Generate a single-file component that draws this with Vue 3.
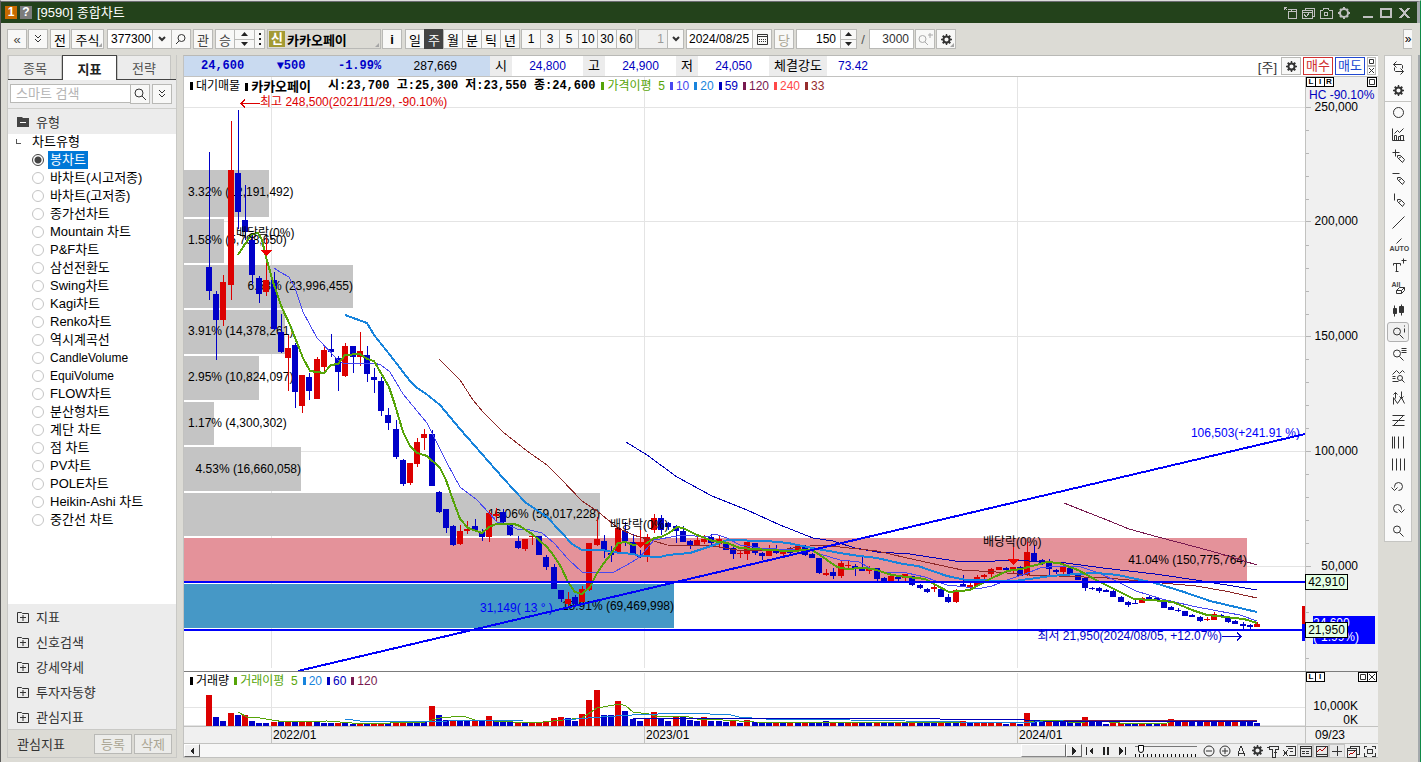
<script setup>
import { ref, computed } from 'vue'

const chartType = ref('봉차트')
const chartTypes = [
  '봉차트', '바차트(시고저종)', '바차트(고저종)', '종가선차트', 'Mountain 차트', 'P&F차트', '삼선전환도',
  'Swing차트', 'Kagi차트', 'Renko차트', '역시계곡선', 'CandleVolume', 'EquiVolume', 'FLOW차트', '분산형차트',
  '계단 차트', '점 차트', 'PV차트', 'POLE차트', 'Heikin-Ashi 차트', '중간선 차트',
]
const groups = ['지표', '신호검색', '강세약세', '투자자동향', '관심지표']
const periods = ['일', '주', '월', '분', '틱', '년']
const minutes = ['1', '3', '5', '10', '30', '60']

/* Chart space shared by both panes */
const X0 = 184
const W = 1121
const price = { y: 77, h: 594 }
const step = 1048 / 146
const cx = (i) => Math.round(209 + i * step)
const at = (x, y) => ({ left: ((x - X0) / W) * 100 + '%', top: ((y - price.y) / price.h) * 100 + '%' })
const atRight = (x, y) => ({ right: ((X0 + W - x) / W) * 100 + '%', top: ((y - price.y) / price.h) * 100 + '%' })
const axisY = (y) => ({ top: ((y - price.y) / price.h) * 100 + '%' })

/* colour, high, body top, body bottom, low */
const raw = `B152,267,291,300 B291,294,320,360 R275,282,320,326 R121,170,285,300 B110,173,212,229 B185,220,232,240
B235,240,275,284 B276,278,294,303 R260,280,292,296 B272,280,329,330 B314,332,352,353 R335,348,358,391 B343,345,392,408
R375,375,406,413 B373,377,391,400 R357,359,399,399 R345,350,367,374 B334,349,352,357 B356,358,372,391 R343,346,376,377
B346,346,357,373 R332,351,357,366 B346,355,374,382 B368,377,380,393 B377,381,411,416 B408,415,423,430 B420,429,457,459
B459,460,484,486 R463,463,483,485 R438,442,464,467 R429,434,438,450 B430,434,486,486 B491,492,512,513 B509,509,528,533
B525,526,545,546 R525,531,544,545 R521,529,531,534 B519,526,530,531 B529,532,537,541 R510,513,537,542 R508,514,516,521
B509,512,522,525 B524,525,535,536 B536,541,548,549 R539,539,549,551 R535,536,537,545 B536,536,555,555 B555,557,567,570
B564,567,589,589 B590,590,599,602 R592,599,604,607 B595,597,604,605 R586,589,602,602 R543,543,590,591 R517,539,545,546
B535,541,550,558 B546,553,555,562 R527,528,553,553 B522,531,541,546 B534,542,554,554 B550,555,557,558 R534,537,556,562
R514,518,530,533 B515,518,530,535 B522,523,527,530 B525,526,531,543 B526,531,542,542 B540,541,545,549 R537,540,545,546
R535,539,542,544 B534,537,543,547 R535,539,544,547 B543,544,550,550 B547,548,554,559 R550,553,554,558 R541,542,554,560
B543,543,553,555 B552,553,556,560 R545,550,556,556 B545,550,553,554 R551,552,554,556 B547,550,553,554 R545,546,550,551
B545,547,555,556 B553,554,558,558 B558,558,573,574 R569,573,575,576 B568,572,576,579 R561,563,576,578 R561,565,566,568
B564,566,568,576 B555,567,571,571 R566,569,571,574 B568,568,579,581 B577,578,581,583 R576,576,581,582 B577,577,579,581
R574,574,578,581 B576,576,585,586 B584,585,588,589 B588,589,592,593 R584,587,589,592 B588,589,597,597 B594,597,602,603
R589,590,602,603 B575,584,587,587 R580,585,587,589 R575,577,586,586 R574,575,577,579 R568,569,574,579 R567,567,570,570
B567,568,570,572 R567,567,571,574 B566,567,576,576 R542,552,575,576 B545,553,562,562 B559,560,564,565 B559,561,569,575
B569,570,572,574 R563,567,572,574 B567,568,574,575 B573,574,580,580 B577,578,588,591 B587,588,589,590 B587,588,591,593
B589,590,592,592 B590,591,597,597 B596,597,602,602 B601,602,605,607 B600,603,604,604 R597,598,603,603 B596,597,599,600
B597,598,601,601 B600,601,608,608 B606,607,610,610 B608,610,611,612 B611,611,616,616 B614,615,617,617 B616,617,621,622
R617,619,620,621 R612,614,620,620 B614,615,617,618 B617,617,622,623 B620,621,624,624 B622,624,626,629 B624,625,627,629
R622,624,627,627`
const candles = raw.split(/\s+/).map((s, i) => {
  const [high, top, bottom, low] = s.slice(1).split(',').map(Number)
  return { x: cx(i), up: s[0] === 'R', high, top, bottom, low }
})

const volRaw = `R31 B9 B5 R13 B11 R11 B5 B3 B3 R4 B4 R5 B5 R5 R5 B4 B3 B3 R3 B3 B2 R2 B2 R2 R3 B3 R5 R5 B4 B4 B4 R20 B11 B6 R6
B5 B5 R5 B5 R10 B6 B5 B4 R4 B3 R3 R4 R5 R8 R9 B8 B5 R12 R26 R36 B11 B11 R25 B15 B7 B5 R8 R14 B8 B5 R10 B9 B6 B5 R9 B5 B5
B4 R6 B3 R6 B4 B4 B3 R3 B3 R3 B3 R4 B3 B3 B5 R3 B4 R4 R3 B3 B3 R3 B3 B3 R3 B4 R3 B3 B3 B3 R3 B3 B3 R5 B4 R4 R3 R4 R3
B2 R3 B2 R13 B5 B5 R4 B4 B5 B4 B3 R9 B4 B5 B2 R5 R3 B2 B2 R3 B2 B2 R3 R7 B5 R5 B4 B4 R5 B4 R5 B4 R5 B4 B4 B3`
const volumes = volRaw.split(/\s+/).slice(0, 147).map((s, i) => ({ x: cx(i), up: s[0] === 'R', h: Number(s.slice(1)) }))

const averages = [
  { k: 'm59', p: '626,442 647,455 677,477 712,496 747,510 780,525 813,538 833,541 855,548 877,552 910,554 955,561 988,562 1003,560 1029,561 1066,563 1103,568 1155,574 1196,580 1257,590' },
  { k: 'm120', p: '1064,503 1084,511 1107,520 1129,529 1158,537 1196,547 1218,553 1244,561 1257,565' },
  { k: 'm33', p: '439,359 460,380 473,400 483,412 503,432 527,451 547,465 560,478 582,501 597,511 618,528 633,535 654,541 667,545 713,546 737,550 762,551 780,550 800,547 820,545 840,547 877,551 907,558 962,570 996,572 1029,575 1059,576 1084,577 1107,578 1129,580 1162,583 1196,586 1225,591 1257,598' },
  { k: 'm10', p: '274,268 280,272 289,277 295,288 303,312 310,325 317,338 338,360 343,363 360,364 374,363 381,365 390,372 403,394 427,423 432,433 447,463 460,487 477,500 489,513 497,522 503,523 517,529 530,530 542,533 554,543 568,559 582,572 612,573 627,565 640,557 654,540 683,535 707,537 715,534 727,538 740,545 760,548 812,551 820,554 840,560 859,562 870,568 884,572 907,573 925,577 947,585 966,587 977,589 992,586 1010,579 1025,574 1040,568 1059,566 1081,567 1099,573 1118,582 1136,591 1162,599 1192,606 1218,611 1240,615 1257,621' },
  { k: 'm20', p: '345,315 367,323 374,335 390,355 410,381 417,388 425,393 440,405 460,429 503,478 525,502 547,517 561,532 572,544 582,550 603,550 612,552 633,554 640,556 660,557 668,555 690,553 720,543 727,540 767,541 788,543 812,548 840,553 859,556 877,558 903,564 918,566 947,576 966,580 1014,581 1029,579 1051,576 1077,574 1096,573 1118,575 1136,579 1155,583 1184,592 1210,601 1257,612' },
  { k: 'm5', p: '238,255 245,244 252,234 258,233 262,240 266,257 273,282 282,308 290,325 303,358 310,371 324,373 331,365 338,364 345,355 360,354 367,359 374,361 389,387 395,405 403,432 410,446 417,453 427,456 440,468 446,480 453,500 460,519 468,528 482,533 489,527 496,524 513,524 518,525 532,534 547,547 554,556 561,567 568,582 575,592 582,594 590,587 597,573 604,563 611,554 618,543 626,542 633,545 647,543 654,538 661,537 669,533 677,527 683,528 697,535 713,541 727,543 740,548 753,549 787,551 812,550 820,555 827,560 837,567 847,569 862,568 873,569 892,575 907,577 925,579 934,584 949,592 970,590 977,586 992,578 1007,571 1021,569 1036,565 1047,562 1059,563 1078,570 1096,580 1114,589 1134,599 1151,600 1173,602 1192,610 1207,615 1225,617 1244,619 1257,623' },
]
const volAverages = [
  { k: 'm5', p: '238,711 247,716 260,717 272,719 285,721 327,720 352,722 390,722 425,721 440,717 463,715 475,719 513,721 544,721 563,719 582,717 597,707 620,703 626,705 633,711 649,713 658,716 685,715 697,718 723,719 754,721 1023,722 1040,719 1059,719 1073,722 1097,720 1120,722 1167,722 1173,720 1207,720 1257,721' },
  { k: 'm20', p: '345,718 360,720 390,721 448,720 524,719 563,719 601,716 632,714 658,713 689,712 731,714 739,716 765,718 850,719 960,721 1010,722 1060,720 1257,721' },
  { k: 'm59', p: '633,717 780,717 940,718 1010,718 1040,720 1257,721' },
  { k: 'm120', p: '1064,719 1257,719' },
]
const zones = [
  { y: 170, h: 47, to: 269, k: 'gray', t: '3.32% (12,191,492)', ty: 192 },
  { y: 219, h: 44, to: 224, k: 'gray', t: '1.58% (5,798,650)', ty: 240 },
  { y: 265, h: 43, to: 353, k: 'gray', t: '6.53% (23,996,455)', ty: 286, end: true },
  { y: 310, h: 44, to: 285, k: 'gray', t: '3.91% (14,378,261)', ty: 331 },
  { y: 356, h: 44, to: 259, k: 'gray', t: '2.95% (10,824,097)', ty: 377 },
  { y: 402, h: 43, to: 214, k: 'gray', t: '1.17% (4,300,302)', ty: 423 },
  { y: 447, h: 44, to: 301, k: 'gray', t: '4.53% (16,660,058)', ty: 469, end: true },
  { y: 493, h: 43, to: 600, k: 'gray', t: '16.06% (59,017,228)', ty: 514, end: true },
  { y: 538, h: 43, to: 1247, k: 'rose', t: '41.04% (150,775,764)', ty: 560, end: true },
  { y: 584, h: 44, to: 674, k: 'sky', t: '18.91% (69,469,998)', ty: 606, end: true },
]
const zoneLabel = (z) => (z.end ? atRight(z.to, z.ty) : at(188, z.ty))
const notes = [
  { x: 260, y: 102, t: '최고 248,500(2021/11/29, -90.10%)', k: 'red' },
  { x: 236, y: 233, t: '배당락(0%)', k: 'ink' },
  { x: 610, y: 525, t: '배당락(0%)', k: 'ink' },
  { x: 983, y: 542, t: '배당락(0%)', k: 'ink' },
  { x: 480, y: 608, t: '31,149( 13 ° )', k: 'blue' },
]
const arrows = [[266, 238, 250], [640, 530, 542], [1013, 547, 559]]
const gridX = [271, 644, 1017]
const gridY = [107, 221, 336, 451, 566]
const axisLabels = gridY.map((y, i) => ({ y, t: ['250,000', '200,000', '150,000', '100,000', '50,000'][i] }))
const minor = computed(() => {
  const out = []
  for (let n = 1; n < 25; n++) if (n % 5) out.push(Math.round(107 + n * 22.95))
  return out
})

const gear = 'M7 0h2v2l2 1 1.500-1.500 2 2L13 5l1 2h2v2h-2l-1 2 1.500 1.500-2 2L11 13l-2 1v2H7v-2l-2-1-1.500 1.500-2-2L3 11 2 9H0V7h2l1-2-1.500-1.500 2-2L5 3l2-1zM8 5a3 3 0 1 0 0 6 3 3 0 0 0 0-6z'
const lens = 'M10 7a3.500 3.500 0 1 1-7 0 3.500 3.500 0 0 1 7 0zM9 10l4 4'
const tools = [
  { n: '새로고침', d: 'M6 1L3 4l3 3M3 4h8l1 1v3M10 8l3 3-3 3M13 11H5l-1-1V7' },
  { n: '설정', d: gear, gear: true },
  { n: '원', d: 'M13 8A5 5 0 1 1 3 8a5 5 0 0 1 10 0z', rule: true },
  { n: '차트', d: 'M2 2v12h12M4 14V9h2v5M8 14V10h2v4M10 14V9h3v5M4 7l3-3 2 2 4-4' },
  { n: '십자선 그리기', d: 'M2 4h7M5 1v7M7 7h3l4 4-2 3-5-5zM8 10l3-2' },
  { n: '수평선 그리기', d: 'M2 3h7M7 7h3l4 4-2 3-5-5zM8 10l3-2' },
  { n: '수직선 그리기', d: 'M4 1v7M7 7h3l4 4-2 3-5-5zM8 10l3-2' },
  { n: '추세선', d: 'M2 14L14 2' },
  { n: '자동 추세선', d: 'M6 7l5-5', t: 'AUTO', ty: 14 },
  { n: '텍스트', d: 'M3 7V5h7v2M6 5v8M5 13h3M11 2h5M13 0v5' },
  { n: '전체 지우기', d: 'M6 10l3-3h5l-3 3zM6 10v3h5v-3M11 13l3-3V7', t: 'All', ty: 6 },
  { n: '캔들', d: 'M3 6h3v5H3zM9 4h4v6H9zM4 3v11M11 2v11', solid: true },
  { n: '돋보기 정보', d: lens + 'M14 4v4M14 1v1', on: true },
  { n: '돋보기 목록', d: lens + 'M11 2h5M11 4h5M11 6h5' },
  { n: '구간 분석', d: 'M2 6l4-4 3 3 3-3 2 2M2 8h3M2 10h3M2 13h6M12 9.500a2.500 2.500 0 1 1-5 0 2.500 2.500 0 0 1 5 0zM11 11l3 3' },
  { n: '파동', d: 'M3 14V7l4 6 4-6 3 6M5 2v6M3 4l2-2 2 2M11 1v7M9 6l2 2 2-2' },
  { n: '지그재그', d: 'M2 3h12M2 8h12M2 13h12M13 3L3 13' },
  { n: '시간대', d: 'M2 2v12M4 2v12M8 2v12M13 2v12' },
  { n: '등간격', d: 'M2 2v12M6 2v12M10 2v12M14 2v12' },
  { n: '되돌리기', d: 'M4 9V8a4 4 0 1 1 4 4M1 9l3 3 3-3' },
  { n: '다시하기', d: 'M11 9V8a4 4 0 1 0-4 4M8 9l3 3 3-3' },
  { n: '확대', d: lens },
]
const bottomTools = [
  { n: '축소', d: 'M13 8A5 5 0 1 1 3 8a5 5 0 0 1 10 0zM5 8h6', round: true },
  { n: '확대', d: 'M13 8A5 5 0 1 1 3 8a5 5 0 0 1 10 0zM5 8h6M8 5v6', round: true },
  { n: '글자', d: 'M5 13V10l3-7 3 7v3M5 10h6' },
  { n: '설정', d: gear, gear: true },
  { n: '공구', d: 'M4 3h9v3h-3v8H7V6H4zM2 4h2M9 9h3' },
  { n: '내보내기', d: 'M5 3h9v9H8M7 5h5M9 8h3M2 7l5 6M7 7l-5 6' },
  { n: '표', d: 'M3 3h11v10H3zM3 5h11M5 8h3M5 10h3M9 8h3M9 10h3', on: true },
  { n: '차트창', d: 'M3 3h11v10H3zM3 11h11', r: 'M4 9l3-3 2 2 4-4', on: true },
  { n: '십자선', d: 'M8 3v10M3 8h10', on: true },
  { n: '창 복사', d: 'M5 5V3h9v8h-3M2 5h9v9H2zM2 7h9', r: 'M4 12l2-2 1 1 3-3' },
  { n: '전체화면', d: 'M3 6V3h3M11 3h3v3M14 10v3h-3M6 13H3v-3M6 6h5v4H6z' },
]
</script>

<template>
  <div class="window">
    <header class="title">
      <span class="badge orange">1</span><span class="badge">?</span>
      <h1>[9590] 종합차트</h1>
      <div class="sys">
        <button aria-label="분리"><svg width="16" height="16" viewBox="0 0 16 16"><path d="M2 5V2h3M2 2l3 3M6 4h8v9H6V6M6 6h8M9 4v2" /></svg></button>
        <button aria-label="복사"><svg width="16" height="16" viewBox="0 0 16 16"><path d="M5 5V3h9v8h-2M2 5h10v8H2zM2 7h10M4 9l2 3 4-5" /></svg></button>
        <button aria-label="캡처"><svg width="16" height="16" viewBox="0 0 16 16"><path d="M2 5h3l1-2h4l1 2h3v8H2zM10 9a2 2 0 1 1-4 0 2 2 0 0 1 4 0z" /></svg></button>
        <button aria-label="설정"><svg width="16" height="16" viewBox="0 0 16 16"><path class="medium" d="M12 8a4 4 0 1 1-8 0 4 4 0 0 1 8 0zM8 2v2M8 12v2M2 8h2M12 8h2M4 4l1 1M11 11l1 1M4 12l1-1M11 5l1-1" /></svg></button>
        <button class="gap" aria-label="최소화"><svg width="16" height="16" viewBox="0 0 16 16"><path class="thick" d="M3 12h10" /></svg></button>
        <button aria-label="최대화"><svg width="16" height="16" viewBox="0 0 16 16"><path class="thick" d="M3 4h10v8H3z" /></svg></button>
        <button aria-label="닫기"><svg width="16" height="16" viewBox="0 0 16 16"><path class="thick" d="M4 3l9 10M13 3L4 13" /></svg></button>
      </div>
    </header>

    <div class="toolbar">
      <button class="tb soft">«</button>
      <button class="tb"><svg width="8" height="10" viewBox="0 0 8 10"><path d="M1 1l3 3 3-3M1 5l3 3 3-3" /></svg></button>
      <button class="tb g1">전</button>
      <button class="tb stock corner">주식</button>
      <div class="joined g2">
        <input class="code" aria-label="종목코드" value="377300">
        <button class="tb" aria-label="목록"><svg width="10" height="10" viewBox="0 0 10 10"><path class="thick" d="M2 3l3 3 3-3" /></svg></button>
        <button class="tb" aria-label="검색"><svg width="14" height="14" viewBox="0 0 14 14"><path d="M11 6a3.500 3.500 0 1 1-7 0 3.500 3.500 0 0 1 7 0zM5 9l-3 3" /></svg></button>
      </div>
      <button class="tb g1 dim">관</button>
      <div class="joined g1">
        <button class="tb dim">승</button>
        <div class="spin tallspin"><button aria-label="이전"><svg width="7" height="4" viewBox="0 0 7 4"><path class="fill" d="M0 4h7L3.500 0z" /></svg></button><button aria-label="다음"><svg width="7" height="4" viewBox="0 0 7 4"><path class="fill" d="M0 0h7L3.500 4z" /></svg></button></div>
        <button class="tb dots" aria-label="더보기"><svg width="2" height="12" viewBox="0 0 2 12"><path class="fill" d="M0 0h2v2H0zM0 5h2v2H0zM0 10h2v2H0z" /></svg></button>
      </div>
      <button class="tb name corner g1"><b class="sin">신</b><b>카카오페이</b></button>
      <button class="tb"><b>i</b></button>
      <div class="joined g2">
        <button v-for="p in periods" :key="p" class="tb" :class="{ dark: p === '주' }">{{ p }}</button>
      </div>
      <div class="joined mins">
        <button v-for="m in minutes" :key="m" class="tb">{{ m }}</button>
      </div>
      <div class="joined g1">
        <input class="cycle" aria-label="주기" value="1" disabled>
        <button class="tb slim" aria-label="주기 목록"><svg width="10" height="10" viewBox="0 0 10 10"><path class="thick" d="M2 3l3 3 3-3" /></svg></button>
      </div>
      <div class="joined g1">
        <input class="date" aria-label="날짜" value="2024/08/25">
        <button class="tb" aria-label="달력"><svg width="13" height="13" viewBox="0 0 13 13"><path d="M1.500 1.500h10v10h-10zM1 3.500h11" /><path class="dash" d="M3 6.500h7M3 8.500h7" /></svg></button>
      </div>
      <button class="tb faint g1" disabled>당</button>
      <div class="joined g1">
        <input class="count" aria-label="봉 개수" value="150">
        <div class="spin"><button aria-label="증가"><svg width="7" height="4" viewBox="0 0 7 4"><path class="fill" d="M0 4h7L3.500 0z" /></svg></button><button aria-label="감소"><svg width="7" height="4" viewBox="0 0 7 4"><path class="fill" d="M0 0h7L3.500 4z" /></svg></button></div>
      </div>
      <span class="slash">/</span>
      <input class="total" aria-label="전체 개수" value="3000">
      <button class="tb faint" aria-label="추가 조회"><svg width="16" height="16" viewBox="0 0 16 16"><path d="M9 8a3.500 3.500 0 1 1-7 0 3.500 3.500 0 0 1 7 0zM8 11l3 3M11 4h5M13 2v5" /></svg></button>
      <button class="tb corner" aria-label="환경설정"><svg width="11" height="11" viewBox="0 0 16 16"><path class="gear" :d="gear" /></svg></button>
      <button class="tb more">»</button>
    </div>

    <div class="work">
      <aside class="side">
        <nav class="tabs">
          <button>종목</button><button class="on">지표</button><button>전략</button>
        </nav>
        <div class="search">
          <input aria-label="스마트 검색" placeholder="스마트 검색">
          <button class="tb" aria-label="찾기"><svg width="14" height="14" viewBox="0 0 14 14"><path d="M10 6a4 4 0 1 1-8 0 4 4 0 0 1 8 0zM9 9l4 4" /></svg></button>
          <button class="tb gapped" aria-label="펼치기"><svg width="8" height="10" viewBox="0 0 8 10"><path d="M1 1l3 3 3-3M1 5l3 3 3-3" /></svg></button>
        </div>
        <button class="sec"><svg width="12" height="10" viewBox="0 0 12 10"><path class="folder" d="M0 0h5l1 1h6v9H0z" /><path class="white" d="M3 5.500h6" /></svg>유형</button>
        <div class="tree">
          <div class="root"><span class="elbow"></span>차트유형</div>
          <label v-for="c in chartTypes" :key="c" :class="{ small: c.endsWith('Volume') }">
            <input v-model="chartType" type="radio" name="type" :value="c"><span>{{ c }}</span>
          </label>
        </div>
        <button v-for="g in groups" :key="g" class="group"><svg width="12" height="12" viewBox="0 0 12 12"><path d="M.5 1.500h4l1 1h6v9H.5zM3 6.500h6M6 4v6" /></svg>{{ g }}</button>
        <div class="fav"><span>관심지표</span><button disabled>등록</button><button disabled>삭제</button></div>
      </aside>

      <main class="main">
        <div class="info">
          <div class="now"><b>24,600</b><b>▼500</b><b>-1.99%</b><span>287,669</span></div>
          <i>시</i><em>24,800</em><i>고</i><em>24,900</em><i>저</i><em>24,050</em><i class="power">체결강도</i><em>73.42</em>
          <div class="right">
            <span>[주]</span>
            <button class="tb" aria-label="설정"><svg width="11" height="11" viewBox="0 0 16 16"><path class="gear" :d="gear" /></svg></button>
            <button class="buy">매수</button><button class="sell">매도</button>
            <div class="mini"><button aria-label="최대"><svg width="9" height="9" viewBox="0 0 9 9"><path d="M2.500 2.500h4v4h-4z" /></svg></button><button aria-label="닫기"><svg width="9" height="9" viewBox="0 0 9 9"><path d="M2 2l5 5M7 2L2 7" /></svg></button></div>
          </div>
        </div>

        <div class="row grow">
          <div class="plot">
            <svg class="layer" viewBox="184 77 1121 594" preserveAspectRatio="none">
              <path class="grid" :d="gridY.map(y => `M184 ${y}.5H1305`).join('') + gridX.map(x => `M${x}.5 77V668`).join('')" />
              <rect v-for="z in zones" :key="z.y" :class="z.k" x="184" :y="z.y" :width="z.to - 184" :height="z.h" />
            </svg>
            <span v-for="z in zones" :key="z.t" class="lab ink" :style="zoneLabel(z)">{{ z.t }}</span>
            <svg class="layer" viewBox="184 77 1121 594" preserveAspectRatio="none">
              <g v-for="c in candles" :key="c.x" :class="c.up ? 'up' : 'down'">
                <rect :x="c.x" :y="c.high" width="1" :height="Math.max(1, c.low - c.high)" />
                <rect :x="c.x - 3" :y="c.top" width="6" :height="Math.max(1, c.bottom - c.top)" />
              </g>
              <polyline v-for="a in averages" :key="a.k" class="ma" :class="a.k" :points="a.p" />
              <path class="trend" d="M184 582H1305M184 630H1305M298 671L1305 434" />
              <path v-for="a in arrows" :key="a[0]" class="event" :d="`M${a[0]} ${a[1]}h1v${a[2] - a[1]}h5l-5.500 6-5.500-6h5z`" />
              <path class="redline" d="M260 103.500H241M245 99.500l-4 4 4 4" />
              <path class="blueline" d="M1222 636.500h19M1237 632.500l4 4-4 4" />
              <rect class="up" x="1302" y="606" width="3" height="18" />
              <rect class="blk" x="1302" y="624" width="3" height="17" />
            </svg>
            <span v-for="n in notes" :key="n.x" class="lab" :class="n.k" :style="at(n.x, n.y)">{{ n.t }}</span>
            <span class="lab blue" :style="atRight(1300, 433)">106,503(+241.91 %)</span>
            <span class="lab navy" :style="atRight(1222, 636)">최저 21,950(2024/08/05, +12.07%)</span>
            <div class="legend">
              <span>대기매물</span><b>카카오페이</b><b class="ohlc">시:23,700 고:25,300 저:23,550 종:24,600</b>
              <span class="c5">가격이평&nbsp; 5</span><span class="c10">10</span><span class="c20">20</span><span class="c59">59</span><span class="c120">120</span><span class="c240">240</span><span class="c33">33</span>
            </div>
          </div>
          <div class="axis">
            <svg class="layer" viewBox="0 77 73 594" preserveAspectRatio="none">
              <path class="tick" :d="gridY.map(y => `M0 ${y}.5h5`).join('') + minor.map(y => `M0 ${y}.5h3`).join('')" />
            </svg>
            <div class="boxes"><button>L</button><button>I</button><button>R</button><button class="last" aria-label="확대"><svg width="8" height="8" viewBox="0 0 8 8"><path d="M1.500 1.500h5v5h-5z" /></svg></button></div>
            <span class="hc" :style="axisY(95)">HC -90.10%</span>
            <span v-for="l in axisLabels" :key="l.y" class="num" :style="axisY(l.y)">{{ l.t }}</span>
            <div class="last-price" :style="axisY(630)"><span>24,600</span><span>(-1.99%)</span></div>
            <span class="tag" :style="axisY(582)">42,910</span>
            <span class="tag" :style="axisY(630)">21,950</span>
          </div>
        </div>

        <div class="row vol">
          <div class="plot">
            <svg class="layer" viewBox="184 671 1121 54" preserveAspectRatio="none">
              <path class="grid" :d="'M184 706.500H1305M184 724.500H1305' + gridX.map(x => `M${x}.5 672V725`).join('')" />
              <rect v-for="v in volumes" :key="v.x" :class="v.up ? 'up' : 'down'" :x="v.x - 3" :y="725 - v.h" width="6" :height="v.h" />
              <polyline v-for="a in volAverages" :key="a.k" class="ma thin" :class="a.k" :points="a.p" />
            </svg>
            <div class="legend"><span>거래량</span><span class="c5">거래이평&nbsp; 5</span><span class="c20">20</span><span class="c59">60</span><span class="c120">120</span></div>
          </div>
          <div class="axis">
            <div class="boxes"><button>L</button><button>I</button><button class="last" aria-label="확대"><svg width="8" height="8" viewBox="0 0 8 8"><path d="M1.500 1.500h5v5h-5z" /></svg></button><button aria-label="닫기"><svg width="8" height="8" viewBox="0 0 8 8"><path d="M1 1l6 6M7 1L1 7" /></svg></button></div>
            <div class="volnums"><span>10,000K</span><span>0K</span></div>
          </div>
        </div>

        <div class="row dates">
          <div class="plot">
            <span :style="{ left: (87 / W) * 100 + '%' }">2022/01</span>
            <span :style="{ left: (460 / W) * 100 + '%' }">2023/01</span>
            <span :style="{ left: (833 / W) * 100 + '%' }">2024/01</span>
          </div>
          <div class="axis">09/23</div>
        </div>

        <div class="bottom">
          <button class="sb" aria-label="왼쪽"><svg width="8" height="8" viewBox="0 0 8 8"><path class="fill" d="M6 0v8L2 4z" /></svg></button>
          <div class="track"><div class="thumb"></div></div>
          <button class="sb" aria-label="오른쪽"><svg width="8" height="8" viewBox="0 0 8 8"><path class="fill" d="M2 0v8l4-4z" /></svg></button>
          <button class="play" aria-label="처음"><svg width="10" height="8" viewBox="0 0 10 8"><path class="fill" d="M1 0h1v8H1zM8 0v8L4 4z" /></svg></button>
          <button class="play" aria-label="일시정지"><svg width="10" height="8" viewBox="0 0 10 8"><path class="fill" d="M2 0h2v8H2zM6 0h2v8H6z" /></svg></button>
          <button class="play" aria-label="끝"><svg width="10" height="8" viewBox="0 0 10 8"><path class="fill" d="M8 0h1v8H8zM2 0v8l4-4z" /></svg></button>
          <input class="range" type="range" aria-label="재생 속도" min="0" max="20" value="1">
          <button v-for="b in bottomTools" :key="b.n" class="bt" :class="{ on: b.on }" :aria-label="b.n">
            <svg :width="b.gear ? 11 : 16" :height="b.gear ? 11 : 16" viewBox="0 0 16 16"><path :class="{ gear: b.gear, round: b.round }" :d="b.d" /><path v-if="b.r" class="crim" :d="b.r" /></svg>
          </button>
        </div>
      </main>

      <aside class="tools">
        <button v-for="t in tools" :key="t.n" :class="{ on: t.on, rule: t.rule }" :aria-label="t.n">
          <svg v-if="t.gear" width="11" height="11" viewBox="0 0 16 16"><path class="gear" :d="t.d" /></svg>
          <svg v-else width="16" height="16" viewBox="-0.5 -0.5 16 16">
            <path :class="{ solid: t.solid }" :d="t.d" />
            <text v-if="t.t" :x="t.t === 'All' ? 1 : -1" :y="t.ty">{{ t.t }}</text>
          </svg>
        </button>
      </aside>
    </div>
  </div>
</template>

<style>
html, body { height: 100%; }
body { margin: 0; background: #dcdbd5; }
</style>

<style scoped>
* { box-sizing: border-box; }
.window {
  display: flex; flex-direction: column; min-height: 100vh;
  border-top: 1px solid #dcdcdc; border-left: 1px solid #5a5a5a; border-right: 1px solid #0f8a47;
  background: #dcdbd5; color: #000;
  font-family: "Liberation Sans", "Noto Sans CJK KR", sans-serif; font-size: 12px;
}
button, input { font: inherit; color: inherit; margin: 0; padding: 0; border-radius: 0; }
button { border: 0; background: none; display: flex; align-items: center; justify-content: center; flex: none; white-space: nowrap; }
svg { display: block; flex: none; }
svg path { fill: none; stroke: #333; stroke-width: 1; }
svg path.thick { stroke-width: 2; }
svg path.gear { fill: #333; stroke: none; fill-rule: evenodd; }
svg path.fill { fill: #222; stroke: none; }
svg path.dash { stroke-dasharray: 1 1; }

.title { height: 22px; display: flex; align-items: center; background: #23421b; border-top: 1px solid #6c6c72; border-right: 3px solid #a4a8ac; padding: 0 5px 0 4px; color: #fff; }
.title h1 { font-size: 13px; font-weight: 400; margin: 0 0 0 2px; line-height: 18px; }
.badge { width: 12px; height: 13px; line-height: 13px; background: #7c7c7c; font-weight: 700; font-size: 12px; text-align: center; margin-right: 3px; }
.badge.orange { background: #c86a00; }
.sys { margin-left: auto; display: flex; align-items: center; gap: 2px; }
.sys .gap { margin-left: 6px; }
.sys svg path { stroke: #c0c0c0; shape-rendering: crispEdges; }
.sys svg path.medium { stroke-width: 2; shape-rendering: auto; }

.toolbar { height: 32px; display: flex; align-items: center; gap: 1px; padding: 0 8px 0 6px; font-size: 13px; }
.g1 { margin-left: 1px; }
.g2 { margin-left: 2px; }
.tb { height: 20px; width: 20px; background: #f8f8f7; border: 1px solid #b9b9b6; position: relative; }
.soft { color: #444; }
.stock { width: 33px; }
.joined { display: flex; }
.joined > * + * { margin-left: -1px; }
.mins { font-size: 12px; }
.toolbar input { height: 20px; border: 1px solid #b9b9b6; background: #fff; font-size: 12px; min-width: 0; }
.code { width: 46px; padding-left: 3px; }
.dim { color: #444; }
.corner::after { content: ""; position: absolute; right: 1px; bottom: 1px; border: 2px solid transparent; border-right-color: #a5a5a5; border-bottom-color: #a5a5a5; }
.spin { width: 17px; height: 20px; display: flex; flex-direction: column; border: 1px solid #b9b9b6; background: #f8f8f7; }
.tallspin { width: 21px; }
.spin button { flex: 1; }
.spin button + button { border-top: 1px solid #b9b9b6; }
.dots { width: 11px; }
.name { width: 114px; background: #dcdbd5; justify-content: flex-start; font-size: 13px; }
.sin { background: #a39a34; color: #fff; width: 16px; height: 16px; line-height: 15px; margin: 0 2px 0 1px; font-weight: 700; }
.dark { background: #444; color: #fff; border-color: #444; }
.cycle { width: 30px; text-align: right; padding-right: 3px; background: #f0f0ef !important; color: #999; }
.slim { width: 17px; }
.date { width: 67px; padding-left: 2px; }
.faint { color: #aaa593; }
.faint svg path { stroke: #aaa; }
.count { width: 45px; text-align: right; padding-right: 4px; }
.total { width: 45px; text-align: right; padding-right: 4px; color: #333; }
.slash { width: 10px; text-align: center; color: #555; }
.more { margin-left: auto; width: 9px; font-size: 12px; border-right: 0; }

.work { flex: 1; display: flex; gap: 6px; padding: 0 6px 4px; border-right: 2px solid #a4a8ac; min-height: 0; }

.side { width: 170px; flex: none; display: flex; flex-direction: column; background: #ececec; border-left: 1px solid #c9c9c6; border-right: 1px solid #c9c9c6; font-size: 13px; color: #333; }
.tabs { display: flex; height: 25px; background: #dcdbd5; border-bottom: 1px solid #444; }
.tabs button { width: 54px; height: 24px; background: #ececec; border: 1px solid #c5c5c2; border-bottom: 0; color: #555; }
.tabs .on { background: #fff; border-color: #444; color: #222; font-weight: 700; width: 55px; height: 25px; }
.search { height: 29px; display: flex; padding: 4px 4px 5px 2px; border-bottom: 1px solid #cfcfcc; background: #ececec; }
.search input { flex: 1; min-width: 0; border: 1px solid #b9b9b6; border-right: 0; padding-left: 5px; font-size: 13px; background: #fff; }
.search input::placeholder { color: #b4b4b4; }
.gapped { margin-left: 2px; }
.sec, .group { height: 25px; width: 100%; justify-content: flex-start; padding-left: 9px; gap: 7px; }
.sec svg path.folder { fill: #444; stroke: none; }
.sec svg path.white { stroke: #fff; }
.tree { flex: 1; background: #fff; color: #000; padding-bottom: 4px; }
.root { height: 17px; line-height: 16px; display: flex; gap: 11px; padding-left: 8px; }
.elbow { width: 5px; height: 5px; border: solid #555; border-width: 0 0 1px 1px; margin-top: 5px; }
.tree label { height: 18px; display: flex; align-items: center; gap: 4px; padding-left: 24px; }
.tree label.small { font-size: 12px; }
.tree label.small span { line-height: 19px; }
.tree label span { padding: 0 2px; height: 18px; line-height: 17px; }
.tree input { appearance: none; width: 12px; height: 12px; border: 1px solid #c4c4c4; border-radius: 50%; background: #fff; }
.tree input:checked { border-color: #444; background: radial-gradient(#444 0 3px, #fff 4px); }
.tree input:checked + span { background: #0078d7; color: #fff; }
.fav { height: 29px; display: flex; align-items: center; background: #dcdbd5; border-top: 1px solid #c9c9c6; border-bottom: 1px solid #c9c9c6; padding: 0 4px 0 9px; }
.fav span { flex: 1; }
.fav button { width: 38px; height: 20px; border: 1px solid #b9b9b6; background: #ececea; color: #aaa593; margin-left: 2px; }

.main { flex: 1; min-width: 0; display: flex; flex-direction: column; border-left: 1px solid #c2c2c0; border-top: 1px solid #b9b9b6; background: #fff; }
.info { height: 21px; display: flex; align-items: center; border-bottom: 1px solid #c2c2c0; white-space: nowrap; }
.info > i, .info > em { font-style: normal; height: 20px; line-height: 20px; text-align: center; }
.info > i { width: 22px; background: #ececec; font-size: 13px; }
.info > i.power { width: 58px; }
.info > em { width: 71px; color: #0000c0; }
.info > em:last-of-type { width: 52px; }
.now { width: 306px; height: 20px; background: #c9daf0; display: flex; align-items: center; justify-content: space-between; padding: 0 33px 0 17px; }
.now b { color: #0000c8; font-family: "Liberation Mono", "DejaVu Sans Mono", monospace; }
.right { margin-left: auto; display: flex; align-items: center; gap: 2px; padding-right: 2px; font-size: 13px; }
.right > span { margin-right: 2px; color: #333; }
.right .tb { width: 20px; height: 18px; }
.buy, .sell { width: 30px; height: 18px; border: 1px solid #d03030; color: #d03030; background: #fff; line-height: 16px; }
.sell { border-color: #2048d0; color: #2048d0; }
.mini button { border: 1px solid #b9b9b6; background: #fff; width: 9px; height: 9px; }

.row { display: flex; flex: none; }
.row.grow { flex: 1; min-height: 0; }
.plot { flex: 1; min-width: 0; position: relative; overflow: hidden; }
.axis { width: 73px; flex: none; position: relative; background: #f0f0f0; border-left: 1px solid #c2c2c0; }
.layer { position: absolute; inset: 0; width: 100%; height: 100%; shape-rendering: crispEdges; }
.layer path.grid { stroke: #e4e4e4; }
.layer path.tick { stroke: #b4b4b4; }
.gray { fill: #c4c4c4; }
.rose { fill: #e4929a; }
.sky { fill: #4698c6; }
.up { fill: #dc0000; }
.down { fill: #0000c8; }
.blk { fill: #0000ff; }
.ma { fill: none; stroke-width: 1; }
.m5 { stroke: #56a408; stroke-width: 2; }
.m10 { stroke: #4848f0; }
.m20 { stroke: #1884dc; stroke-width: 2; }
.m33 { stroke: #8c2828; }
.m59 { stroke: #0000b8; }
.m120 { stroke: #781a50; }
.ma.thin { stroke-width: 1; }
.layer path.trend { stroke: #0000fa; stroke-width: 2; }
.layer path.event { fill: #f00000; stroke: none; }
.layer path.redline { stroke: #dc0000; }
.layer path.blueline { stroke: #0000c8; }
.lab { position: absolute; line-height: 14px; margin-top: -7px; white-space: pre; }
.ink { color: #000; }
.red { color: #dc0000; }
.blue { color: #0000fa; }
.navy { color: #0000c8; }
.legend { position: absolute; left: 6px; top: 2px; line-height: 15px; display: flex; gap: 5px; white-space: nowrap; }
.legend span::before, .legend b:not(.ohlc)::before { content: ""; display: inline-block; width: 3px; height: 8px; background: currentColor; margin-right: 3px; }
.legend b { font-size: 13px; }
.legend .ohlc { font-family: "Liberation Mono", "Noto Sans CJK KR", monospace; font-size: 12px; margin: 0 1px 0 12px; }
.c5 { color: #56a408; }
.c10 { color: #4848f0; }
.c20 { color: #1884dc; }
.c59 { color: #0000c0; }
.c120 { color: #781a50; }
.c240 { color: #ff4848; }
.c33 { color: #962c2c; }
.boxes { position: absolute; left: 0; right: 1px; top: 0; display: flex; }
.boxes button { width: 10px; height: 10px; border: 1px solid #000; background: #fff; font-size: 8px; font-weight: 700; line-height: 8px; margin-right: -1px; }
.boxes .last { margin-left: auto; }
.boxes button:last-child { margin-right: 0; }
.hc { position: absolute; left: 3px; line-height: 14px; margin-top: -7px; color: #0000c0; white-space: nowrap; }
.num { position: absolute; right: 20px; line-height: 14px; margin-top: -7px; }
.tag { position: absolute; left: -1px; width: 43px; height: 16px; line-height: 14px; margin-top: -8px; border: 1px solid #000; background: #e4ffe4; text-align: center; }
.last-price { position: absolute; left: 7px; right: 3px; margin-top: -14px; background: #0000ff; color: #fff; height: 28px; display: flex; flex-direction: column; line-height: 14px; }
.vol { height: 55px; border-top: 1px solid #7c7c7c; }
.volnums { position: absolute; right: 20px; bottom: -1px; display: flex; flex-direction: column; text-align: right; line-height: 14px; }
.dates { height: 17px; background: #f0f0f0; border-top: 1px solid #c2c2c0; line-height: 16px; }
.dates .plot span { position: absolute; padding-left: 1px; border-left: 1px solid #c2c2c0; }
.dates .axis { padding-left: 9px; }
.bottom { height: 15px; display: flex; align-items: center; background: #f0f0f0; border-top: 1px solid #c2c2c0; border-bottom: 1px solid #c2c2c0; padding-right: 1px; }
.sb { width: 16px; height: 13px; background: #f0f0f0; border: 1px solid #fff; border-right-color: #666; border-bottom-color: #666; }
.track { flex: 1; height: 13px; background: #f7f7f7; }
.thumb { width: 45px; height: 13px; margin-left: auto; background: #f0f0f0; border: 1px solid #fff; border-right-color: #666; border-bottom-color: #888; }
.play { width: 16px; height: 13px; }
.range { appearance: none; width: 62px; height: 13px; margin: 0 4px 0 5px; background: linear-gradient(#777, #777) 0 2px / 100% 1px no-repeat, repeating-linear-gradient(90deg, #111 0 1px, transparent 1px 4px) 0 100% / 100% 3px no-repeat; }
.range::-webkit-slider-thumb { appearance: none; width: 6px; height: 8px; margin-bottom: 4px; background: #fff; border: 1px solid #000; border-radius: 0 0 3px 3px; }
.bt { width: 16px; height: 14px; overflow: visible; }
.bt.on { border: 1px solid #c4c4c4; background: #e8e8e8; }
.bottom svg path { shape-rendering: crispEdges; }
.bottom svg path.round, .bottom svg path.gear { shape-rendering: auto; }
svg path.crim { stroke: #b00000; }

.tools { width: 28px; flex: none; align-self: flex-start; display: flex; flex-direction: column; background: #fafafa; border: 1px solid #c5c5c2; height: 487px; padding-top: 1px; }
.tools button { height: 22px; width: 22px; margin: 0 2px; }
.tools .rule { position: relative; }
.tools .rule::before { content: ""; position: absolute; top: 0; left: -2px; right: -2px; border-top: 1px solid #c5c5c2; }
.tools .on { border: 1px solid #b0b0b0; border-radius: 3px; background: #f0f0f0; height: 20px; margin: 1px 2px; }
.tools svg { overflow: visible; }
.tools svg path.solid { fill: #333; }
.tools text { font-size: 7px; font-weight: 700; fill: #444; }
</style>
